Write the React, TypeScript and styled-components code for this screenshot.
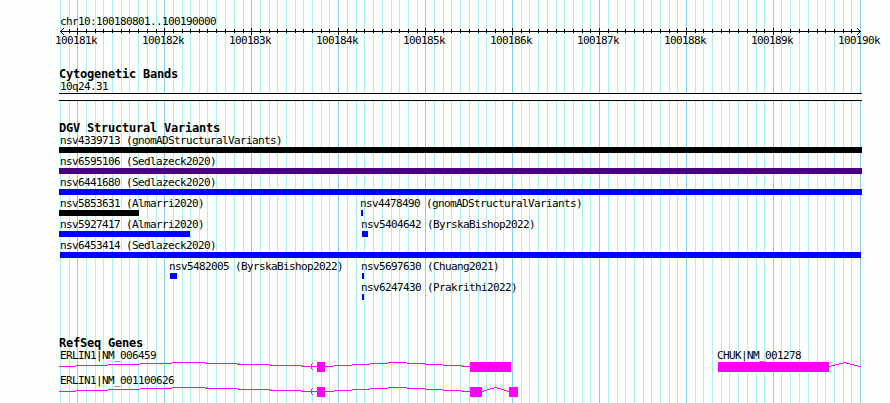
import styled, { createGlobalStyle } from "styled-components";

const GlobalStyle = createGlobalStyle`
  body {
    margin: 0;
    background: #fdfffc;
  }
`;

const WIDTH = 890;
const HEIGHT = 403;

const Browser = styled.main`
  position: relative;
  box-sizing: border-box;
  width: ${WIDTH}px;
  height: ${HEIGHT}px;
  padding-top: 16px;
  overflow: hidden;
  background: #fdfffc;
  color: #000;
  font-family: "DejaVu Sans Mono", monospace;
  font-size: 11px;
  line-height: 12px;
  letter-spacing: -0.622px;
`;

const GridLines = styled.svg`
  position: absolute;
  inset: 0;
`;

const Content = styled.div`
  position: relative;
  display: flex;
  flex-direction: column;
`;

const Region = styled.div`
  height: 12px;
  padding-left: 60px;
  white-space: pre;
`;

const RulerSvg = styled.svg`
  display: block;
`;

const RulerLabels = styled.div`
  display: grid;
  grid-template-columns: repeat(10, 87px);
  height: 12px;
  padding-left: 55px;
`;

const Track = styled.section<{ $gap: number }>`
  margin-top: ${({ $gap }) => $gap}px;
`;

const TrackTitle = styled.h2`
  height: 13px;
  margin: 0;
  padding-left: 59px;
  font-size: 12px;
  font-weight: bold;
  line-height: 13px;
  letter-spacing: -0.224px;
`;

const Band = styled.div`
  box-sizing: border-box;
  width: 803px;
  height: 8px;
  margin-left: 59px;
  border: solid #000;
  border-width: 1px 0;
  background: #fdfffc;
`;

// Features of one lane share a single cell and are shifted to their start
const Lane = styled.div<{ $height: number }>`
  display: grid;
  height: ${({ $height }) => $height}px;
  align-items: start;
`;

const Feature = styled.div<{ $start: number }>`
  grid-area: 1 / 1;
  padding-left: ${({ $start }) => $start}px;
`;

const FeatureLabel = styled.div<{ $shift?: number }>`
  height: 12px;
  margin-left: ${({ $shift }) => $shift ?? 0}px;
  white-space: pre;
`;

const Bar = styled.div<{ $width: number; $color: string }>`
  width: ${({ $width }) => $width}px;
  height: 6px;
  background: ${({ $color }) => $color};
`;

const GeneSvg = styled.svg`
  display: block;
  grid-area: 1 / 1;
  margin-top: 12px;
`;

const majors = [77, 164, 251, 338, 425, 512, 599, 686, 773, 860];

const minors = [
    60, 69,
    86, 95, 103, 112, 121, 129, 138, 147, 156,
    173, 182, 190, 199, 207, 216, 225, 234, 243,
    260, 269, 277, 286, 295, 303, 312, 321, 329,
    347, 356, 364, 373, 382, 391, 399, 408, 417,
    434, 443, 451, 460, 469, 478, 486, 495, 503,
    521, 529, 538, 547, 556, 564, 573, 582, 590,
    608, 617, 625, 634, 643, 651, 660, 669, 677,
    695, 703, 712, 721, 729, 738, 747, 756, 764,
    781, 790, 799, 808, 817, 825, 834, 843, 851,
];

interface Variant {
    name: string;
    start: number;
    end: number;
    color: string;
    shift: number;
}

const BLUE = "#0000ff";

const variantLanes: Variant[][] = [
    [{ name: "nsv4339713 (gnomADStructuralVariants)", start: 59, end: 862, color: "#000", shift: 1 }],
    [{ name: "nsv6595106 (Sedlazeck2020)", start: 59, end: 862, color: "#4b0082", shift: 1 }],
    [{ name: "nsv6441680 (Sedlazeck2020)", start: 59, end: 862, color: BLUE, shift: 1 }],
    [
        { name: "nsv5853631 (Almarri2020)", start: 59, end: 139, color: "#000", shift: 1 },
        { name: "nsv4478490 (gnomADStructuralVariants)", start: 361, end: 363, color: BLUE, shift: -1 },
    ],
    [
        { name: "nsv5927417 (Almarri2020)", start: 59, end: 190, color: BLUE, shift: 1 },
        { name: "nsv5404642 (ByrskaBishop2022)", start: 362, end: 368, color: BLUE, shift: -1 },
    ],
    [{ name: "nsv6453414 (Sedlazeck2020)", start: 60, end: 861, color: BLUE, shift: 0 }],
    [
        { name: "nsv5482005 (ByrskaBishop2022)", start: 170, end: 177, color: BLUE, shift: -1 },
        { name: "nsv5697630 (Chuang2021)", start: 362, end: 364, color: BLUE, shift: -1 },
    ],
    [{ name: "nsv6247430 (Prakrithi2022)", start: 362, end: 364, color: BLUE, shift: -1 }],
];

interface GeneLane {
    labels: { name: string; start: number }[];
    exons: [number, number][];
    introns: [number, number][];
    arrow: number;
}

const geneLanes: GeneLane[] = [
    {
        labels: [
            { name: "ERLIN1|NM_006459", start: 60 },
            { name: "CHUK|NM_001278", start: 717 },
        ],
        exons: [[317, 325], [470, 511], [718, 829]],
        introns: [[60, 317], [325, 470], [829, 860]],
        arrow: 310,
    },
    {
        labels: [{ name: "ERLIN1|NM_001100626", start: 60 }],
        exons: [[317, 325], [470, 482], [509, 518]],
        introns: [[60, 317], [325, 470], [482, 509]],
        arrow: 310,
    },
];

// Hat-shaped intron, rising 4px to the middle in one pixel steps
const intronPath = ([from, to]: [number, number]) => {
    const step = (to - from) / 8;
    let d = "";
    for (let i = 0; i <= 8; i++) {
        const x1 = i === 0 ? from - 1 : Math.round(from + (i - 0.5) * step);
        const x2 = i === 8 ? to + 1 : Math.round(from + (i + 0.5) * step);
        d += `M${x1} ${Math.abs(i - 4) + 0.5}H${x2}`;
    }
    return d;
};

// Arrow head made of single pixels, offsets[i] is the distance from the tip in row i
const arrowPath = (x: number, y: number, offsets: number[], dir = 1) =>
    offsets.map((o, i) => `M${x + o * dir} ${y + i}h1v1h-1z`).join("");

const RULER_HEAD = [3, 2, 1, 0, 1, 2, 3];
const GENE_HEAD = [2, 1, 1, 0, 1, 1, 2];

const Ruler = () => (
    <>
        <RulerSvg width={WIDTH} height={7} shapeRendering="crispEdges">
            <rect x={60} y={3} width={801} height={1} />
            {minors.slice(1).map((x) => (
                <rect key={x} x={x} y={1} width={1} height={4} />
            ))}
            {majors.slice(0, -1).map((x) => (
                <rect key={x} x={x} y={0} width={1} height={7} />
            ))}
            <path d={arrowPath(60, 0, RULER_HEAD)} />
            <path d={arrowPath(860, 0, RULER_HEAD, -1)} />
        </RulerSvg>
        <RulerLabels>
            {majors.map((x, i) => (
                <span key={x}>{100181 + i}k</span>
            ))}
        </RulerLabels>
    </>
);

const App = () => {
    return (
        <>
            <GlobalStyle />
            <Browser>
                <GridLines width={WIDTH} height={HEIGHT} shapeRendering="crispEdges">
                    {minors.map((x) => (
                        <rect key={x} x={x} width={1} height={HEIGHT} fill="#afeeee" />
                    ))}
                    {majors.map((x) => (
                        <rect key={x} x={x} width={1} height={HEIGHT} fill="#87ceeb" />
                    ))}
                </GridLines>

                <Content>
                    <Region>chr10:100180801..100190000</Region>
                    <Ruler />

                    <Track $gap={21}>
                        <TrackTitle>Cytogenetic Bands</TrackTitle>
                        <Region>10q24.31</Region>
                        <Band />
                    </Track>

                    <Track $gap={21}>
                        <TrackTitle>DGV Structural Variants</TrackTitle>
                        {variantLanes.map((lane, i) => (
                            <Lane key={i} $height={21}>
                                {lane.map((v) => (
                                    <Feature key={v.name} $start={v.start}>
                                        <FeatureLabel $shift={v.shift}>{v.name}</FeatureLabel>
                                        <Bar $width={v.end - v.start} $color={v.color} />
                                    </Feature>
                                ))}
                            </Lane>
                        ))}
                    </Track>

                    <Track $gap={34}>
                        <TrackTitle>RefSeq Genes</TrackTitle>
                        {geneLanes.map((lane, i) => (
                            <Lane key={i} $height={25}>
                                {lane.labels.map((label) => (
                                    <Feature key={label.name} $start={label.start}>
                                        <FeatureLabel>{label.name}</FeatureLabel>
                                    </Feature>
                                ))}
                                <GeneSvg width={WIDTH} height={10} shapeRendering="crispEdges">
                                    <g fill="none" stroke="#ff00ff">
                                        {lane.introns.map((intron) => (
                                            <path key={intron[0]} d={intronPath(intron)} />
                                        ))}
                                    </g>
                                    <path d={arrowPath(lane.arrow, 1, GENE_HEAD)} fill="#ff00ff" />
                                    {lane.exons.map(([from, to]) => (
                                        <rect key={from} x={from} width={to - from} height={10} fill="#ff00ff" />
                                    ))}
                                </GeneSvg>
                            </Lane>
                        ))}
                    </Track>
                </Content>
            </Browser>
        </>
    );
};

export default App;
